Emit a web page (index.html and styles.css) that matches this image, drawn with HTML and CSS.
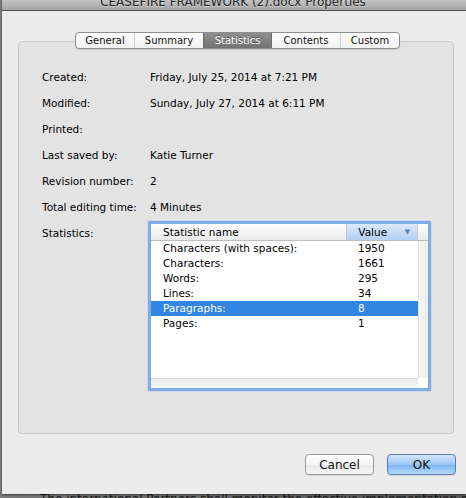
FILE: index.html
```html
<!DOCTYPE html>
<html lang="en">
<head>
    <meta charset="UTF-8">
    <title>CEASEFIRE FRAMEWORK (2).docx Properties</title>
    <link rel="stylesheet" href="styles.css">
</head>
<body>

    <div class="window">
        <div class="titlebar">
            <div class="title">CEASEFIRE FRAMEWORK (2).docx Properties</div>
        </div>

        <div class="tabs">
            <span class="tab tab-general">General</span>
            <span class="tab tab-summary">Summary</span>
            <span class="tab tab-stats activo">Statistics</span>
            <span class="tab tab-contents">Contents</span>
            <span class="tab tab-custom">Custom</span>
        </div>

        <div class="grupo">
            <div class="props">
                <div class="label">Created:</div>
                <div class="value">Friday, July 25, 2014 at 7:21 PM</div>
                <div class="label">Modified:</div>
                <div class="value">Sunday, July 27, 2014 at 6:11 PM</div>
                <div class="label">Printed:</div>
                <div class="value"></div>
                <div class="label">Last saved by:</div>
                <div class="value">Katie Turner</div>
                <div class="label">Revision number:</div>
                <div class="value">2</div>
                <div class="label">Total editing time:</div>
                <div class="value">4 Minutes</div>
                <div class="label">Statistics:</div>

                <!-- lista de estadisticas -->
                <div class="stats">
                    <div class="stats-head">
                        <div class="col-name">Statistic name</div>
                        <div class="col-value">Value <span class="sort">&#9660;</span></div>
                        <div class="head-end"></div>
                    </div>
                    <div class="stats-middle">
                        <div class="rows">
                            <div class="row"><span>Characters (with spaces):</span><span class="num">1950</span></div>
                            <div class="row"><span>Characters:</span><span class="num">1661</span></div>
                            <div class="row"><span>Words:</span><span class="num">295</span></div>
                            <div class="row"><span>Lines:</span><span class="num">34</span></div>
                            <div class="row seleccionado"><span>Paragraphs:</span><span class="num">8</span></div>
                            <div class="row"><span>Pages:</span><span class="num">1</span></div>
                        </div>
                        <div class="vscroll"></div>
                    </div>
                    <div class="stats-foot">
                        <div class="hscroll"></div>
                        <div class="corner"></div>
                    </div>
                </div>
            </div>
        </div>

        <div class="botones">
            <button class="boton">Cancel</button>
            <button class="boton boton-ok">OK</button>
        </div>
    </div>

    <div class="detras">The international Partners shall monitor the effective implementation of</div>

</body>
</html>
```

FILE: styles.css
```css
body {
    margin: 0;
    width: 466px;
    height: 498px;
    overflow: hidden;
    background: linear-gradient(90deg, #7c7c7c, #5c5c5c);
    font-family: "DejaVu Sans", Verdana, sans-serif;
    color: #000;
}

.window {
    position: relative;
    z-index: 1;
    margin-left: 2px;
    height: 494px;
    background-color: #ececec;
    display: flex;
    flex-direction: column;
    box-shadow: 0 1px 2px rgba(0, 0, 0, 0.5);
}

/* barra de titulo */
.titlebar {
    height: 10px;
    overflow: hidden;
    background: linear-gradient(#c2c2c2, #a6a6a6);
    border-bottom: 1px solid #4f4f4f;
}

.title {
    margin-top: -6px;
    margin-left: -2px;
    font-size: 12px;
    line-height: 16px;
    text-align: center;
    color: #262626;
    text-shadow: 0 1px 0 rgba(255, 255, 255, 0.4);
}

/* pestañas */
.tabs {
    position: relative;
    z-index: 1;
    display: flex;
    align-self: flex-start;
    margin: 21px 0 0 73px;
    height: 15px;
    border: 1px solid #8e8e8e;
    border-radius: 4px;
    background: linear-gradient(#ffffff, #f1f1f1);
    box-shadow: 0 1px 1px rgba(0, 0, 0, 0.12);
    overflow: hidden;
}

.tab {
    font-size: 10px;
    line-height: 15px;
    text-align: center;
    color: #111;
    border-left: 1px solid #cfcfcf;
}

.tab:first-child {
    border-left: none;
}

.tab-general { width: 58px; }
.tab-summary { width: 68px; }
.tab-stats { width: 67px; }
.tab-contents { width: 68px; }
.tab-custom { width: 58px; }

.tab.activo {
    border-left: 1px solid #6c6c6c;
    background: linear-gradient(#8f8f8f, #727272);
    color: #fff;
    text-shadow: 0 -1px 0 rgba(0, 0, 0, 0.35);
}

.tab.activo + .tab {
    border-left: 1px solid #6c6c6c;
}

/* caja agrupadora */
.grupo {
    margin: -8px 12px 0 16px;
    height: 393px;
    background-color: #e3e3e3;
    border: 1px solid #c8c8c8;
    border-radius: 4px;
    padding: 22px 0 0 23px;
    box-sizing: border-box;
}

.props {
    display: grid;
    grid-template-columns: 108px 1fr;
    font-size: 10.5px;
    line-height: 26px;
}

.label, .value {
    height: 26px;
    white-space: nowrap;
}

/* tabla de estadisticas */
.stats {
    margin: 1px 0 0 -2px;
    width: 283px;
    height: 170px;
    box-sizing: border-box;
    border: 3px solid #7eaee9;
    border-radius: 2px;
    box-shadow: 0 0 1px #3c7cd0;
    background-color: #fff;
    display: flex;
    flex-direction: column;
    line-height: 15px;
}

.stats-head {
    display: flex;
    height: 17px;
    box-sizing: border-box;
    border-bottom: 1px solid #bdbdbd;
    background: linear-gradient(#ffffff, #e9e9e9);
    line-height: 16px;
}

.col-name {
    width: 196px;
    padding-left: 12px;
    box-sizing: border-box;
}

.col-value {
    width: 71px;
    padding-left: 11px;
    box-sizing: border-box;
    background: linear-gradient(#dce9f9, #b3cff2);
    border-left: 1px solid #b8c9de;
    position: relative;
}

.sort {
    position: absolute;
    right: 7px;
    top: 0;
    font-size: 7px;
    color: #5b7fb3;
}

.head-end {
    width: 10px;
    border-left: 1px solid #d0d0d0;
}

.stats-middle {
    display: flex;
    flex: 1;
}

.rows {
    width: 267px;
}

.row {
    display: grid;
    grid-template-columns: 196px 71px;
    height: 15px;
}

.row span {
    padding-left: 12px;
    white-space: nowrap;
}

.row .num {
    padding-left: 11px;
}

.row.seleccionado {
    background-color: #3285e2;
    color: #fff;
}

.vscroll {
    width: 10px;
    background: linear-gradient(90deg, #f7f7f7, #ececec);
    border-left: 1px solid #e2e2e2;
}

.stats-foot {
    display: flex;
    height: 10px;
}

.hscroll {
    width: 267px;
    background: linear-gradient(#ececec, #f7f7f7);
    border-top: 1px solid #d6d6d6;
}

.corner {
    width: 10px;
    background-color: #fff;
}

/* botones */
.botones {
    display: flex;
    justify-content: flex-end;
    gap: 13px;
    margin: 20px 10px 0 0;
}

.boton {
    width: 69px;
    height: 21px;
    padding: 0;
    font-family: "DejaVu Sans", Verdana, sans-serif;
    font-size: 12px;
    color: #111;
    border: 1px solid #9a9a9a;
    border-radius: 4px;
    background: linear-gradient(#ffffff, #f3f3f3 50%, #e8e8e8 51%, #f6f6f6);
    box-shadow: 0 1px 1px rgba(0, 0, 0, 0.1);
}

.boton-ok {
    border-color: #5b7db4;
    background: linear-gradient(#d3e5fb, #9cc6f4 50%, #7db4f0 51%, #b3dafc);
}

/* documento de atras */
.detras {
    margin: -2px 0 0 40px;
    font-size: 12px;
    line-height: 14px;
    color: #1a1a1a;
    white-space: nowrap;
}
```
